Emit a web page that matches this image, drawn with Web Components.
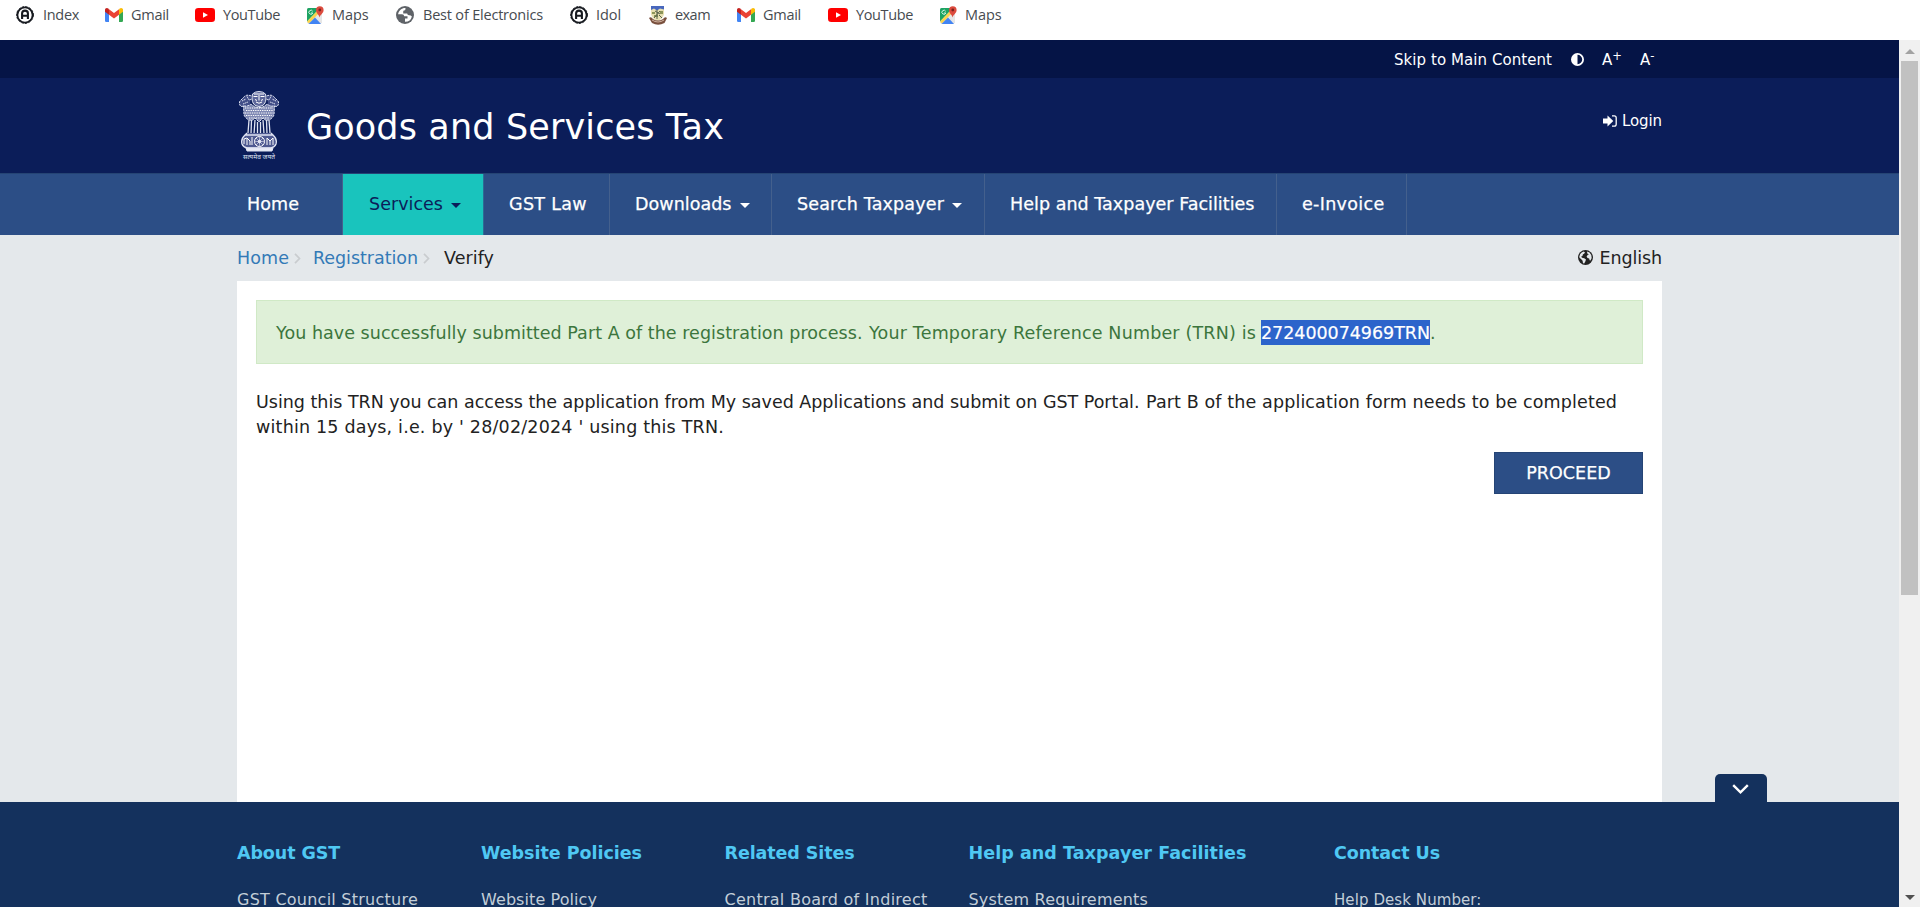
<!DOCTYPE html>
<html lang="en">
<head>
<meta charset="utf-8">
<title>Goods and Services Tax</title>
<style>
html,body{margin:0;height:100%;overflow:hidden;background:#fff}
body{font-family:"DejaVu Sans",Verdana,sans-serif;font-size:17.5px;color:#222}
</style>
</head>
<body>
<gst-app></gst-app>
<script>
const define = (name, html, setup) => {
  const tpl = document.createElement('template');
  tpl.innerHTML = html;
  customElements.define(name, class extends HTMLElement {
    connectedCallback() {
      if (this.shadowRoot) return;
      this.attachShadow({mode: 'open'}).append(tpl.content.cloneNode(true));
      if (setup) setup(this, this.shadowRoot);
    }
  });
};

const ICONS = {
  index: ['0 0 18 18', `<circle cx="9" cy="9" r="7.6" fill="none" stroke="#16191f" stroke-width="1.8"/><circle cx="9" cy="9" r="8.4" fill="none" stroke="#16191f" stroke-width="1" stroke-dasharray="2.4 1.2"/><path d="M6.1 13V7.2Q6.1 4.6 9 4.6T11.9 7.2V13M6.1 9.8H11.9" fill="none" stroke="#16191f" stroke-width="2.1"/>`],
  gmail: ['0 0 18 14', `<path d="M0 1.6V12.7Q0 14 1.3 14H4V6.2L2 2Z" fill="#4285f4"/><path d="M18 1.6V12.7Q18 14 16.700 14H14V6.200L16 2Z" fill="#34a853"/><path d="M14 1.200V6.800L18 3.800V1.900C18 .1 16 -.6 14.700.5Z" fill="#fbbc04"/><path d="M4 6.800V1.200L9 5L14 1.200V6.800L9 10.600Z" fill="#ea4335"/><path d="M0 1.900V3.800L4 6.800V1.200L3.300.5C2-.6 0 .1 0 1.900Z" fill="#c5221f"/>`],
  youtube: ['0 0 20 14', `<rect width="20" height="14" rx="3.300" fill="#f00"/><path d="M8 4.200L13 7L8 9.800Z" fill="#fff"/>`],
  maps: ['0 0 18 18', `<path d="M1 3.500Q1 2 2.500 2H14L16 4V16.500L14.500 18H2.500L1 16.500Z" fill="#e5e5e5"/><path d="M1 3.500Q1 2 2.500 2H14L1 15.500Z" fill="#1da362"/><path d="M1 15.500L14 2L16 4L3 17.500Z" fill="#fbd44c"/><path d="M2.500 18L9 11.500L15 18Z" fill="#4284f3"/><path d="M10.500 10L15.500 5.500V16.500Z" fill="#e8e8e8"/><path d="M6.700 5.300A2 2 0 1 0 6.800 7H5" fill="none" stroke="#d4f5e3" stroke-width="1"/><path d="M13.500 11.500C13.200 8.500 10 7.400 10 4A3.800 3.800 0 0 1 17.600 4C17.600 7.400 14.200 8.500 13.500 11.500Z" fill="#dc4b3e"/><circle cx="13.800" cy="4" r="1.400" fill="#7b231d"/>`],
  globe: ['0 0 18 18', `<circle cx="9" cy="9" r="9" fill="#5f6368"/><path d="M9.500 2C6 1.800 2.600 4.500 2.100 8.200L6 8.300Q8.100 8.400 8.200 10.200H11.500V12.500H9V15.800Q14.500 16 15.900 10.500Q14.800 9.100 13 9.200Q11.300 9.200 11.200 7.400H7.200V5.500Q7.300 4.300 9 4.300Q9.500 3.800 9.500 2Z" fill="#fff"/>`],
  exam: ['0 0 18 19', `<path d="M2 0H15V8Q14 13 8.500 15Q3 13 2 8Z" fill="#e7dfb0"/><path d="M2 0H15V3.500L11 2.500L8 4.500L5 2.500L2 4Z" fill="#4867bd"/><path d="M3 6H6V8H3ZM11 5H14V8H11ZM5 9H9V11H5Z" fill="#8c9559"/><path d="M8 4V13M6 5L11 8M11 5L5 12M10 9L13 12" stroke="#59634a"/><path d="M0 12Q2 10 4 13Q9 16 14 13Q16 10 18 12L15.500 17Q9 20.500 3 17Z" fill="#79503e"/><path d="M3 14Q9 18 15 14" stroke="#d2b3a0" fill="none"/>`],
  contrast: ['0 0 13 13', `<circle cx="6.500" cy="6.500" r="5.600" fill="none" stroke="#fff" stroke-width="1.800"/><path d="M6.500 1A5.500 5.500 0 0 0 6.500 12Z" fill="#fff"/>`],
  login: ['0 0 14 12', `<path d="M0 3.500H4.500V.6L10.300 6L4.500 11.400V8.500H0Z" fill="#fff"/><path d="M9 .9H11.200Q13.200.9 13.200 2.800V9.200Q13.200 11.100 11.200 11.100H9" fill="none" stroke="#fff" stroke-width="1.300"/>`],
  earth: ['0 0 15 15', `<circle cx="7.500" cy="7.500" r="7.500" fill="#222"/><path d="M1.300 6.500L2.200 4Q3.500 2 5.500 1.500L7 2.200L6.300 3.500L4.800 4.500L4.500 6L3.200 6.600L4 7.800L6.200 8.200L8 9.600L7.300 11.400L6.200 13.600L5 13.200L4.600 10.800L3 9L1.500 7.800ZM9 1.600L11.500 2.600L13.300 5L13.700 8L12.500 10.500L11.600 10.200L11.200 8.400L9.500 8.100L8.600 6.600L9.800 4.800L11 4.400L9.300 3.400Z" fill="#e4e8eb"/>`],
  crumb: ['0 0 7 11', `<path d="M1 .8L5.500 5.500L1 10.200" fill="none" stroke="#c9cccf" stroke-width="1.700"/>`],
  caret: ['0 0 10 5', `<path d="M0 0H10L5 5Z" fill="currentColor"/>`],
  down: ['0 0 17 10', `<path d="M1.200 1.200L8.500 8.400L15.800 1.200" fill="none" stroke="#fff" stroke-width="2.400"/>`],
  emblem: ['0 0 40 69', `<g fill="none" stroke="#dfe3f2" stroke-width="1">
    <path d="M13.500 3Q16 .5 20 .5T26.500 3L27 7Q27 15 20 15.500Q13 15 13 7Z" fill="#5c669a"/><path d="M15 3H25M14.500 5.500H18.500M21.500 5.500H25.500M20 4V9.500M17 11Q20 13.500 23 11M16 8.500L18 9.500M24 8.500L22 9.500" stroke="#fff"/>
    <path d="M12.500 5Q7 3 5 6L1 10Q-.5 13 2 15.500L6 15L10 17" fill="#424e88" stroke-dasharray="2.500 .8"/><path d="M27.500 5Q33 3 35 6L39 10Q40.500 13 38 15.500L34 15L30 17" fill="#424e88" stroke-dasharray="2.500 .8"/>
    <path d="M3 10L7 8M4 13L9 11M8 5.500L10 9L13 8M37 10L33 8M36 13L31 11M32 5.500L30 9L27 8" stroke-dasharray="1.600 .6"/>
    <path d="M4.500 15Q8 16 12 13Q16 17 20 16.500Q24 17 28 13Q32 16 35.500 15L35 24Q32 30 26.500 29L24 27L20 31L16 27L13.500 29Q8 30 5 24Z" fill="#7f88b3" stroke-dasharray="2.500 .8"/>
    <path d="M6 17L34 17M7 19.500L34 19.500M6 22L34 22M7 24.500L33 24.500M10 27L30 27" stroke="#fff" stroke-dasharray="1.300 1"/>
    <path d="M10 29L9 42M12.500 29L12 43M16 29L15 43M18.500 31V43M21.500 31V43M24 29L25 43M27.500 29L28 43M30 29L31 42" stroke-width="1.300"/>
    <path d="M8 42L6 44H34L32 42M6 44Q1.500 48 3 53Q4 56 8 57H32Q36 56 37 53Q38.500 48 34 44" fill="#4f5a91" stroke-width="1.300"/>
    <circle cx="20.500" cy="50.500" r="5" stroke="#fff"/><circle cx="20.500" cy="50.500" r="1.400" fill="#fff"/><path d="M15.500 50.500H25.500M20.500 45.500V55.500M17 47L24 54M24 47L17 54" stroke-width=".6"/>
    <path d="M5 53V48L8 47L11 50V54M8 48V54M13 46V54M28 54V47L31 50L34 47V54M31 50V54" stroke="#fff"/>
    <path d="M7 57H34L33 60H8Z" fill="#e8ebf6"/></g>
    <text x="20" y="68" font-size="6.500" text-anchor="middle" textLength="32" lengthAdjust="spacingAndGlyphs" fill="#dfe3f2" font-family="Noto Sans, Noto Sans Devanagari, sans-serif">सत्यमेव जयते</text>`]
};

define('gst-icon', `<style>:host{display:block;flex:none}svg{display:block;width:100%;height:100%;overflow:visible}</style><svg></svg>`, (el, root) => {
  const [box, body] = ICONS[el.getAttribute('name')];
  const svg = root.querySelector('svg');
  svg.setAttribute('viewBox', box);
  svg.setAttribute('preserveAspectRatio', 'none');
  svg.innerHTML = body;
  const [, , w, h] = box.split(' ');
  el.style.width = w + 'px';
  el.style.height = h + 'px';
});

define('bookmark-link', `<style>
:host{display:flex;align-items:center;height:30px;font:14.500px/20px "Open Sans","Noto Sans",sans-serif;color:#474b50}
gst-icon{margin-right:var(--g,8px)}</style><slot></slot>`, (el, root) => {
  const icon = document.createElement('gst-icon');
  icon.setAttribute('name', el.getAttribute('icon'));
  root.querySelector('slot').before(icon);
});

define('bookmark-bar', `<style>:host{display:flex;height:40px;background:#fff;padding-left:16px;box-sizing:border-box}bookmark-link{flex:none;box-sizing:border-box}</style>
<bookmark-link icon="index" style="width:89px;--g:9px"><fit-text w="36">Index</fit-text></bookmark-link>
<bookmark-link icon="gmail" style="width:90px"><fit-text w="38">Gmail</fit-text></bookmark-link>
<bookmark-link icon="youtube" style="width:111px"><fit-text w="57">YouTube</fit-text></bookmark-link>
<bookmark-link icon="maps" style="width:90px"><fit-text w="36.500">Maps</fit-text></bookmark-link>
<bookmark-link icon="globe" style="width:174px;--g:9px"><fit-text w="120">Best of Electronics</fit-text></bookmark-link>
<bookmark-link icon="index" style="width:79px;--g:8px"><fit-text w="25">Idol</fit-text></bookmark-link>
<bookmark-link icon="exam" style="width:88px"><fit-text w="35">exam</fit-text></bookmark-link>
<bookmark-link icon="gmail" style="width:91px"><fit-text w="38">Gmail</fit-text></bookmark-link>
<bookmark-link icon="youtube" style="width:111px"><fit-text w="57">YouTube</fit-text></bookmark-link>
<bookmark-link icon="maps"><fit-text w="36.500">Maps</fit-text></bookmark-link>`);

define('access-bar', `<style>:host{display:flex;height:38px;background:#051446;color:#fff;padding-left:1394px;font-size:15px;line-height:40px}
gst-icon{margin:13px 18px 0 19px}sup{font-size:11.500px;line-height:0;vertical-align:5px}span+span{margin-left:18px}span{white-space:nowrap;width:20px}</style>
<fit-text w="158">Skip to Main Content</fit-text><gst-icon name="contrast"></gst-icon><span>A<sup>+</sup></span><span>A<sup>-</sup></span>`);

define('brand-header', `<style>:host{display:flex;height:95px;background:#0b1d59;color:#fff;padding-left:239px}
.emblem{margin-top:13px}h1{margin:0 0 0 27px;font-weight:400;font-size:35px;line-height:42px;padding-top:28px;width:1297px}
.login{display:flex;font-size:15px;line-height:20px;padding-top:33px}.login gst-icon{margin:4px 5px 0 0}</style>
<gst-icon class="emblem" name="emblem"></gst-icon><h1><fit-text w="418">Goods and Services Tax</fit-text></h1>
<div class="login"><gst-icon name="login"></gst-icon><fit-text w="40">Login</fit-text></div>`);

define('nav-item', `<style>:host{display:flex;height:61px;box-sizing:border-box;padding-left:25px;line-height:61px;border-right:1px solid #44608d;-webkit-text-stroke:.25px currentColor}
:host([active]){background:#19c4bd;color:#0b1d59;border-color:#2c6c94;-webkit-text-stroke:0}
gst-icon{margin:29px 0 0 8px}:host(:not([menu])) gst-icon{display:none}</style><slot></slot><gst-icon name="caret"></gst-icon>`);

define('main-nav', `<style>:host{display:flex;height:62px;box-sizing:border-box;border-top:1px solid #254474;background:#2c4e86;color:#fff;padding-left:221px}nav-item{flex:none}</style>
<nav-item style="width:122px;padding-left:26px"><fit-text w="52">Home</fit-text></nav-item>
<nav-item active menu style="width:141px;padding-left:26px"><fit-text w="74">Services</fit-text></nav-item>
<nav-item style="width:126px"><fit-text w="78">GST Law</fit-text></nav-item>
<nav-item menu style="width:162px"><fit-text w="96.500">Downloads</fit-text></nav-item>
<nav-item menu style="width:213px"><fit-text w="147">Search Taxpayer</fit-text></nav-item>
<nav-item style="width:292px"><fit-text w="244.500">Help and Taxpayer Facilities</fit-text></nav-item>
<nav-item style="width:130px"><fit-text w="82.500">e-Invoice</fit-text></nav-item>`);

define('crumb-bar', `<style>:host{display:flex;height:46px;width:1425px;margin-left:237px;line-height:47px}
a{color:#337ab7}a+gst-icon{margin:18px 12px 0 5px}.lang{display:flex;margin-left:auto}.lang gst-icon{margin:15px 7px 0 0}</style>
<a><fit-text w="52">Home</fit-text></a><gst-icon name="crumb"></gst-icon><a><fit-text w="105">Registration</fit-text></a><gst-icon name="crumb" style="margin-right:14px"></gst-icon><fit-text w="50">Verify</fit-text>
<div class="lang"><gst-icon name="earth"></gst-icon><fit-text w="62.500">English</fit-text></div>`);

define('success-alert', `<style>:host{display:flex;box-sizing:border-box;height:64px;border:1px solid #d0e9c6;background:#dff0d8;color:#3c763d;padding:19px 0 0 19px;line-height:27px}</style><slot></slot>`);
define('action-button', `<style>:host{display:flex;justify-content:center;box-sizing:border-box;width:149px;height:42px;border:1px solid #254475;background:#2c4e86;color:#fff;line-height:40px;-webkit-text-stroke:.25px #fff}</style><slot></slot>`);

define('content-panel', `<style>:host{display:block;box-sizing:border-box;width:1425px;height:521px;margin-left:237px;background:#fff;padding:19px 18px 0 19px;padding-right:18.500px}
mark{background:#2c64cb;color:#fff;margin-left:5px;-webkit-text-stroke:.2px #fff;height:25px}p{margin:26px 0 0;line-height:25px;display:flex;flex-wrap:wrap;column-gap:6.500px}
success-alert,.act{width:1387px}action-button{margin:12px 0 0 auto}.act{display:flex}</style>
<success-alert><fit-text w="586.500">You have successfully submitted Part A of the registration process.</fit-text><fit-text w="387" style="margin-left:6.500px">Your Temporary Reference Number (TRN) is</fit-text><mark><fit-text w="169">272400074969TRN</fit-text></mark><span>.</span></success-alert>
<p><fit-text w="883.500">Using this TRN you can access the application from My saved Applications and submit on GST Portal.</fit-text><fit-text w="471">Part B of the application form needs to be completed</fit-text><fit-text w="468">within 15 days, i.e. by ' 28/02/2024 ' using this TRN.</fit-text></p>
<div class="act"><action-button><fit-text w="84.500">PROCEED</fit-text></action-button></div>`);

define('footer-column', `<style>:host{display:block;flex:none}h2{margin:0;font-size:17.500px;line-height:24px;color:#4fc8f3}div{margin-top:22px;font-size:16px;line-height:25px;color:#c3ced8}</style><h2><slot name="title"></slot></h2><div><slot></slot></div>`);

define('site-footer', `<style>:host{display:flex;position:relative;height:105px;box-sizing:border-box;background:#14315d;padding:39px 0 0 237px}
.top{position:absolute;left:1715px;top:-28px;width:52px;height:28px;border-radius:5px 5px 0 0;background:#14315d}.top gst-icon{margin:9.500px 0 0 17px}</style>
<footer-column style="width:244px"><fit-text slot="title" w="103">About GST</fit-text><fit-text w="181">GST Council Structure</fit-text></footer-column>
<footer-column style="width:243.500px"><fit-text slot="title" w="161">Website Policies</fit-text><fit-text w="116">Website Policy</fit-text></footer-column>
<footer-column style="width:244px"><fit-text slot="title" w="130">Related Sites</fit-text><fit-text w="203">Central Board of Indirect</fit-text></footer-column>
<footer-column style="width:365.500px"><fit-text slot="title" w="278">Help and Taxpayer Facilities</fit-text><fit-text w="179.500" style="line-height:24px">System Requirements</fit-text></footer-column>
<footer-column><fit-text slot="title" w="106">Contact Us</fit-text><fit-text w="147.500" style="font-size:15px">Help Desk Number:</fit-text></footer-column>
<div class="top"><gst-icon name="down"></gst-icon></div>`);

define('scroll-rail', `<style>:host{display:flex;flex-direction:column;align-items:center;width:21px;height:867px;background:#f0f0f0;box-sizing:border-box;padding:9px 0 7px}
.up{color:#a3a3a3;transform:rotate(180deg)}.down{color:#505050;margin-top:auto}.thumb{width:17px;height:534px;margin-top:7px;background:#c1c1c1}</style>
<gst-icon class="up" name="caret"></gst-icon><div class="thumb"></div><gst-icon class="down" name="caret"></gst-icon>`);

define('gst-app', `<style>:host{display:block;width:1920px;height:907px;overflow:hidden}.view{display:grid;grid-template-columns:1899px 21px}.page{background:#e4e8eb;height:867px}</style>
<bookmark-bar></bookmark-bar><div class="view"><div class="page"><access-bar></access-bar><brand-header></brand-header><main-nav></main-nav><crumb-bar></crumb-bar><content-panel></content-panel><site-footer></site-footer></div><scroll-rail></scroll-rail></div>`);

// Spreads its text over a set advance width through letter spacing.
define('fit-text', `<style>:host{display:inline-block;white-space:nowrap}span{display:inline-block}</style><span><slot></slot></span>`, (el, root) => {
  const span = root.querySelector('span'), w = parseFloat(el.getAttribute('w'));
  const natural = span.getBoundingClientRect().width;
  span.style.letterSpacing = (w - natural) / el.textContent.length + 'px';
  el.style.width = w + 'px';
});
</script>
</body>
</html>
